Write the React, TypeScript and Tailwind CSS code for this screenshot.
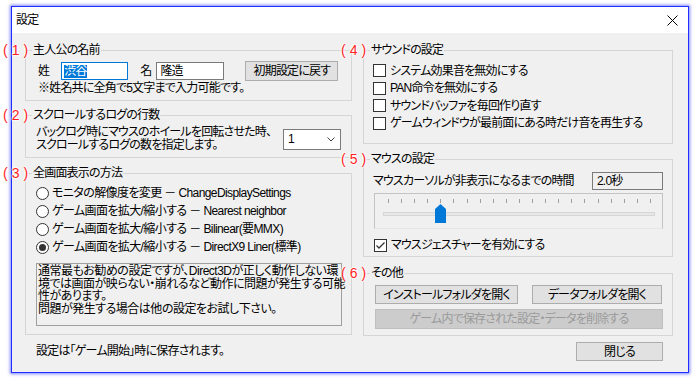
import React from 'react';

// 設定ダイアログ (Windows風)
interface GroupProps {
  num: number;
  title: string;
  className?: string;
  children?: React.ReactNode;
}

function GroupBox({ num, title, className = '', children }: GroupProps) {
  return (
    <fieldset className={`border border-[#d5d5d5] ${className}`}>
      <legend className="relative ml-[6px] px-[1px] text-[12px] leading-[14px]">
        {title}
        {/* 赤い番号ラベル */}
        <span className="absolute -left-[29px] top-0 whitespace-nowrap text-[14px] leading-[14px] tracking-[4px] text-[#ff1f1f] [text-shadow:0_0_2px_#fff,0_0_2px_#fff,0_0_3px_#fff,0_0_3px_#fff]">
          ({num})
        </span>
      </legend>
      {children}
    </fieldset>
  );
}

function Radio({ label, checked = false }: { label: string; checked?: boolean }) {
  return (
    <div className="flex h-[18px] items-center">
      <span className="flex h-[13px] w-[13px] items-center justify-center rounded-full border border-[#333] bg-white">
        {checked && <span className="h-[7px] w-[7px] rounded-full bg-[#333]" />}
      </span>
      <span className="ml-[3px] whitespace-nowrap tracking-[-0.6px]">{label}</span>
    </div>
  );
}

function Check({ label, checked = false, className = '' }: { label: string; checked?: boolean; className?: string }) {
  return (
    <div className={`flex h-[17.5px] items-center ${className}`}>
      <span className="flex h-[13px] w-[13px] items-center justify-center border border-[#333] bg-white">
        {checked && (
          <svg width="11" height="11" viewBox="0 0 11 11">
            <path d="M1.5 5.5 L4 8 L9.5 2.5" fill="none" stroke="#333" strokeWidth="1.3" />
          </svg>
        )}
      </span>
      <span className="ml-[4px] whitespace-nowrap">{label}</span>
    </div>
  );
}

function Button({ children, className = '', disabled = false }: { children: React.ReactNode; className?: string; disabled?: boolean }) {
  return (
    <button
      className={`flex items-center justify-center whitespace-nowrap border text-[12px] ${
        disabled ? 'border-[#bfbfbf] bg-[#cccccc] text-[#9a9a9a]' : 'border-[#adadad] bg-[#e1e1e1] text-black'
      } ${className}`}
    >
      {children}
    </button>
  );
}

export default function App() {
  const ticks = Array.from({ length: 21 });

  return (
    <div className="h-[380px] w-[700px] bg-white pl-[11px] pt-[6px] font-['Liberation_Sans','Noto_Sans_CJK_JP',sans-serif] text-[12px] leading-[14px] tracking-[-0.8px] text-black [font-feature-settings:'palt']">
      <div className="h-[367px] w-[678px] border border-[#1f2dff] bg-[#f0f0f0] shadow-[0_0_3px_1px_rgba(70,80,255,0.7)]">
        {/* タイトルバー */}
        <div className="flex h-[26px] items-center justify-between bg-white pl-[4px] pr-[10px]">
          <span>設定</span>
          <svg width="11" height="11" viewBox="0 0 11 11">
            <path d="M0.5 0.5 L10.5 10.5 M10.5 0.5 L0.5 10.5" stroke="#000" strokeWidth="1" />
          </svg>
        </div>

        <div className="flex pl-[13px] pt-[10px]">
          {/* 左カラム */}
          <div className="flex w-[327px] flex-col">
            <GroupBox num={1} title="主人公の名前" className="h-[58px]">
              <div className="pl-[12px]">
                <div className="mt-[4px] flex h-[20px] items-center">
                  <span>姓</span>
                  <div className="ml-[12px] flex h-[18px] w-[67px] items-center border border-[#0078d7] bg-white pl-[2px]">
                    <span className="bg-[#0078d7] leading-[13px] text-white">渋谷</span>
                  </div>
                  <span className="ml-[12px]">名</span>
                  <div className="ml-[5px] flex h-[18px] w-[68px] items-center border border-[#7a7a7a] bg-white pl-[3px]">
                    隆造
                  </div>
                  <Button className="ml-[21px] h-[20px] w-[93px]">初期設定に戻す</Button>
                </div>
                <div className="whitespace-nowrap">※姓名共に全角で5文字まで入力可能です。</div>
              </div>
            </GroupBox>

            <GroupBox num={2} title="スクロールするログの行数" className="mt-[7px] h-[50px]">
              <div className="mt-[3px] flex h-[28px] items-center justify-between pl-[10px] pr-[10px]">
                <div className="whitespace-nowrap leading-[13px]">
                  バックログ時にマウスのホイールを回転させた時、
                  <br />
                  スクロールするログの数を指定します。
                </div>
                <div className="flex h-[21px] w-[58px] items-center justify-between border border-[#7a7a7a] bg-white pl-[4px] pr-[5px]">
                  <span>1</span>
                  <svg width="8" height="5" viewBox="0 0 8 5">
                    <path d="M0.5 0.5 L4 4 L7.5 0.5" fill="none" stroke="#444" strokeWidth="1" />
                  </svg>
                </div>
              </div>
            </GroupBox>

            <GroupBox num={3} title="全画面表示の方法" className="mt-[8px] h-[169px]">
              <div className="pl-[10px] pt-[4px]">
                <Radio label="モニタの解像度を変更 － ChangeDisplaySettings" />
                <Radio label="ゲーム画面を拡大/縮小する － Nearest neighbor" />
                <Radio label="ゲーム画面を拡大/縮小する － Bilinear(要MMX)" />
                <Radio label="ゲーム画面を拡大/縮小する － DirectX9 Liner(標準)" checked />
                <div className="mt-[7px] h-[63px] w-[306px] whitespace-nowrap border border-[#a0a0a0] px-[1px] pt-[1px] leading-[12.5px] tracking-[-0.5px]">
                  通常最もお勧めの設定ですが、Direct3Dが正しく動作しない環
                  <br />
                  境では画面が映らない・崩れるなど動作に問題が発生する可能
                  <br />
                  性があります。
                  <br />
                  問題が発生する場合は他の設定をお試し下さい。
                </div>
              </div>
            </GroupBox>

            <div className="mt-[9px] pl-[11px]">設定は「ゲーム開始」時に保存されます。</div>
          </div>

          {/* 右カラム */}
          <div className="ml-[11px] flex w-[310px] flex-col">
            <GroupBox num={4} title="サウンドの設定" className="h-[101px]">
              <div className="pl-[9px] pt-[5px]">
                <Check label="システム効果音を無効にする" />
                <Check label="PAN命令を無効にする" />
                <Check label="サウンドバッファを毎回作り直す" />
                <Check label="ゲームウィンドウが最前面にある時だけ音を再生する" />
              </div>
            </GroupBox>

            <GroupBox num={5} title="マウスの設定" className="mt-[8px] h-[105px]">
              <div className="pl-[9px] pr-[9px]">
                <div className="mt-[6px] flex h-[18px] items-center justify-between">
                  <span className="whitespace-nowrap">マウスカーソルが非表示になるまでの時間</span>
                  <div className="flex h-[18px] w-[71px] items-center border border-[#7a7a7a] bg-[#f0f0f0] pl-[4px]">
                    2.0秒
                  </div>
                </div>
                {/* スライダー */}
                <div className="relative ml-[1px] mt-[3px] h-[36px] w-[289px] border border-[#c4c4c4] border-b-[#e6e6e6]">
                  <div className="flex justify-between pl-[13px] pr-[11px] pt-[5px]">
                    {ticks.map((_, i) => (
                      <span key={i} className="h-[4px] w-[1px] bg-[#a0a0a0]" />
                    ))}
                  </div>
                  <div className="ml-[8px] mr-[7px] mt-[9px] h-[4px] border border-[#d6d6d6] bg-[#e7e7e7]" />
                  <svg className="absolute left-[60px] top-[10px]" width="11" height="19" viewBox="0 0 11 19">
                    <path d="M5.5 0 L11 5 L11 19 L0 19 L0 5 Z" fill="#0078d7" />
                  </svg>
                </div>
                <Check label="マウスジェスチャーを有効にする" checked className="ml-[1px] mt-[7px] h-[18px]" />
              </div>
            </GroupBox>

            <GroupBox num={6} title="その他" className="mt-[9px] h-[70px]">
              <div className="pl-[11px]">
                <div className="mt-[5px] flex">
                  <Button className="h-[19px] w-[143px]">インストールフォルダを開く</Button>
                  <Button className="ml-[14px] h-[19px] w-[130px]">データフォルダを開く</Button>
                </div>
                <Button disabled className="mt-[5px] h-[20px] w-[288px]">
                  ゲーム内で保存された設定・データを削除する
                </Button>
              </div>
            </GroupBox>

            <div className="mt-[6px] flex justify-end pr-[10px]">
              <Button className="h-[19px] w-[87px]">閉じる</Button>
            </div>
          </div>
        </div>
      </div>
    </div>
  );
}
